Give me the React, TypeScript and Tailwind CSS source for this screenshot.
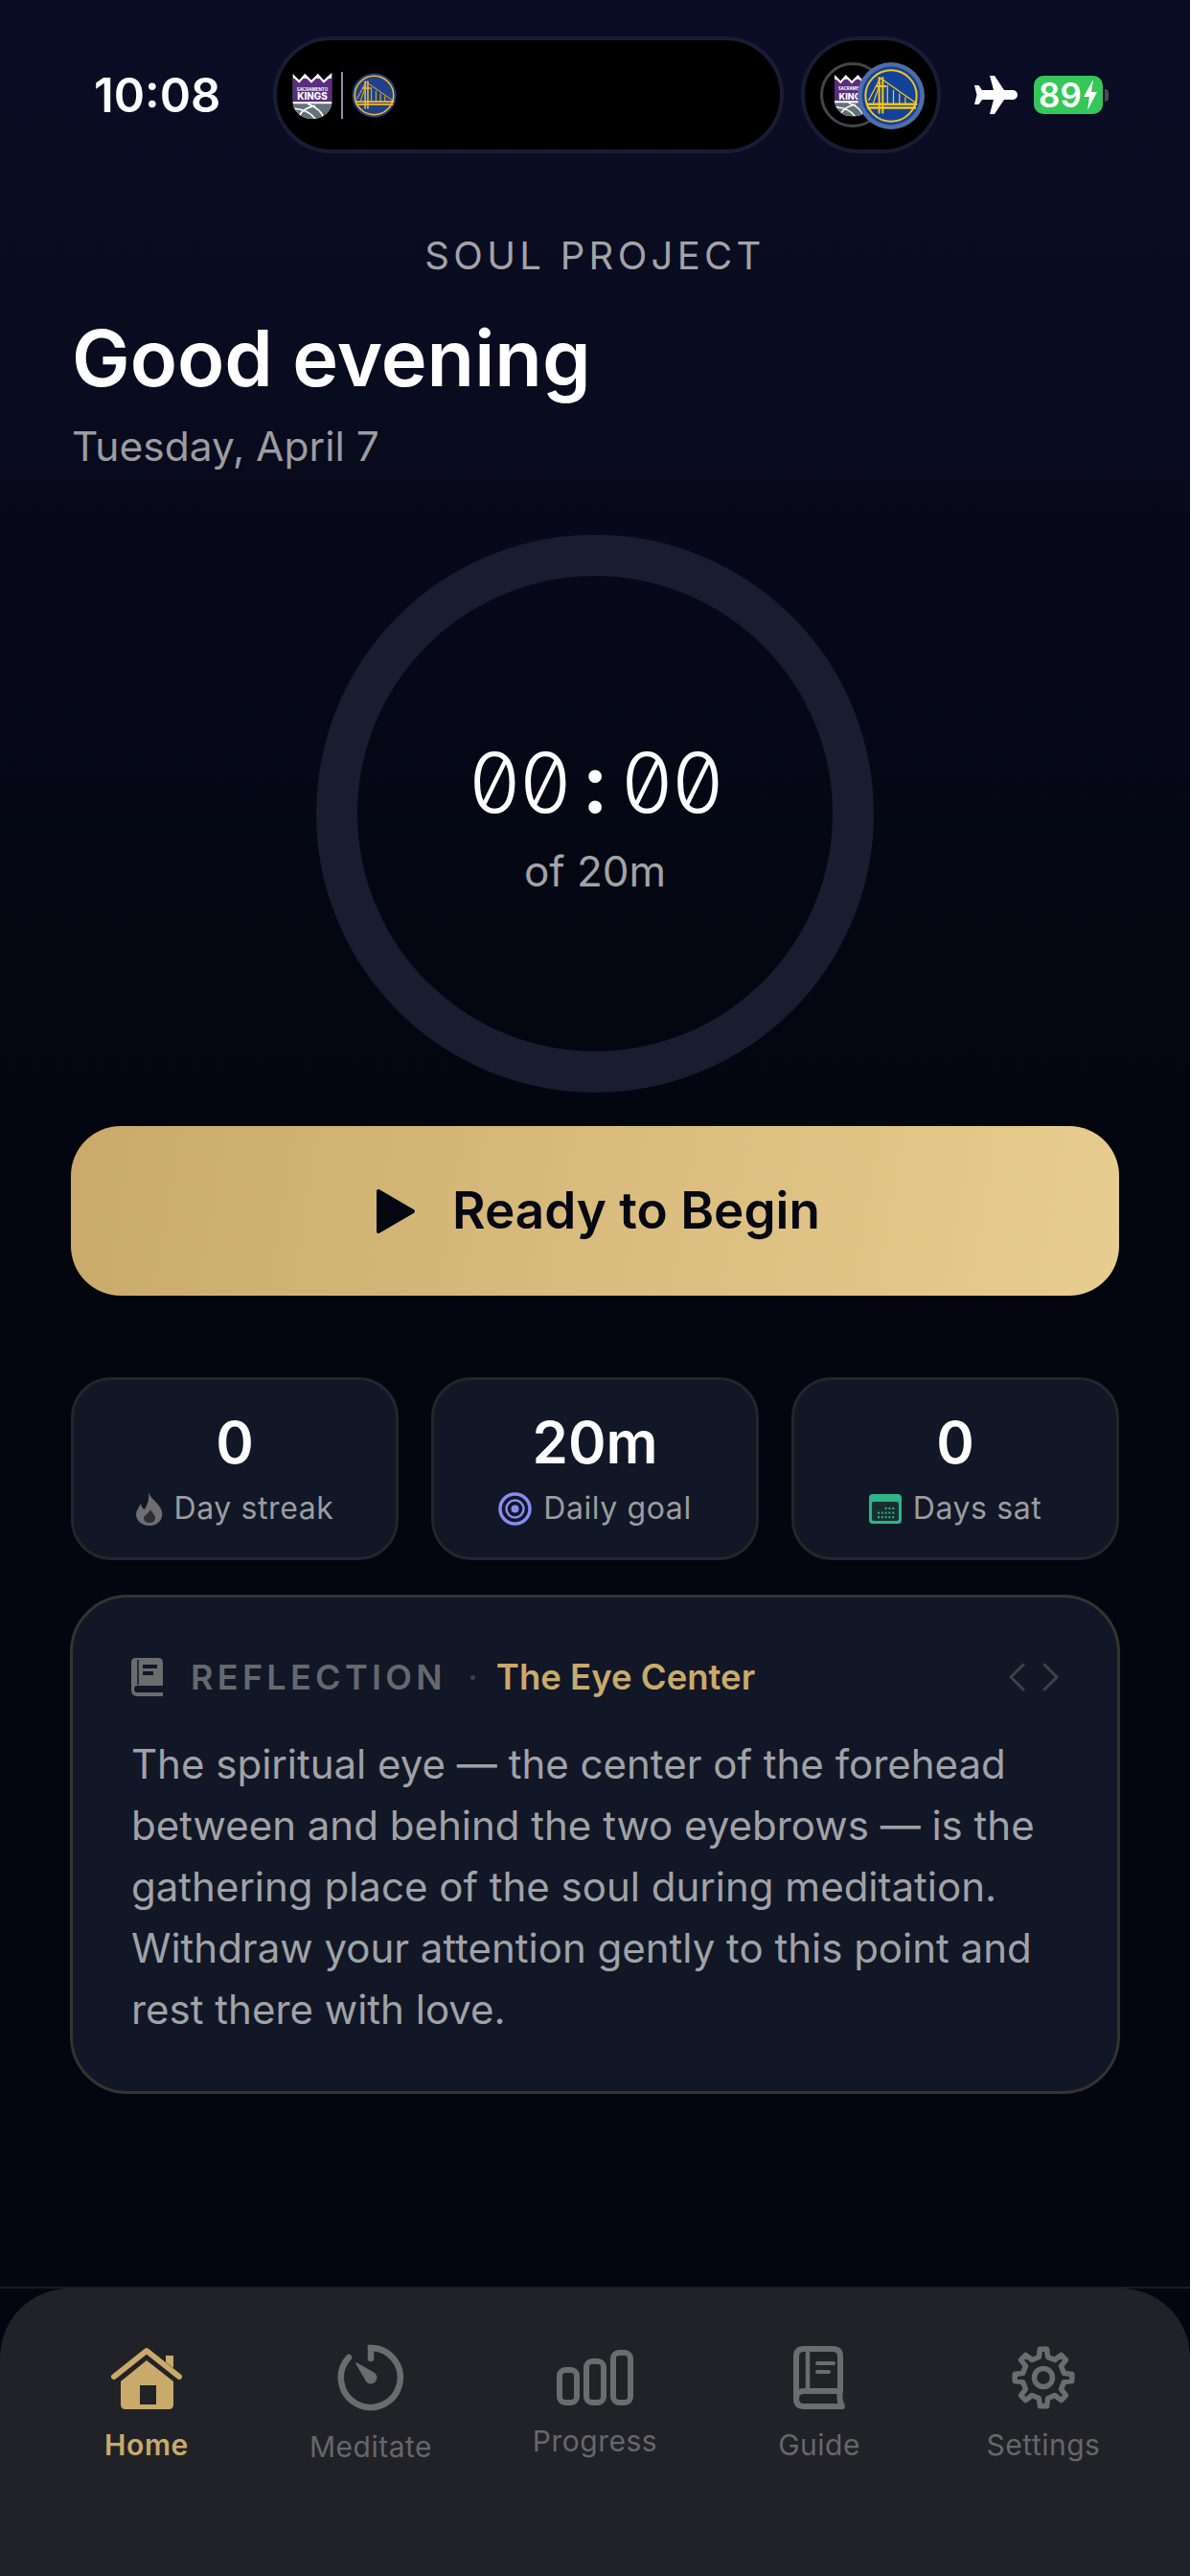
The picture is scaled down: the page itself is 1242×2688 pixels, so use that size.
import React from "react";

function GswLogo({ size, ring = "#fdb927", fill = "#1d428a" }: { size: number; ring?: string; fill?: string }) {
  return (
    <svg width={size} height={size} viewBox="0 0 50 50">
      <circle cx="25" cy="25" r="24.5" fill={fill} />
      <circle cx="25" cy="25" r="21.5" fill="none" stroke={ring} strokeWidth="1.6" />
      <path d="M15 9V40M18 9V40M12 17H21" stroke={ring} strokeWidth="1.6" fill="none" />
      <path d="M6 29L16 10L46 31M10 31L16 14M22 16V32M27 20V32M32 23V32M37 26V32" stroke={ring} strokeWidth="1" fill="none" />
      <path d="M4 32H47M5 35H46" stroke={ring} strokeWidth="2" fill="none" />
    </svg>
  );
}

function KingsLogo({ width, height }: { width: number; height: number }) {
  return (
    <svg width={width} height={height} viewBox="0 0 42 50">
      <defs>
        <clipPath id="shield">
          <path d="M0 2L7 9L13 2L20 9L27 2L33 9L42 1V31C42 42 32 50 21 50C10 50 0 42 0 31Z" />
        </clipPath>
      </defs>
      <g clipPath="url(#shield)">
        <rect width="42" height="50" fill="#fff" />
        <rect y="7" width="42" height="25" fill="#5a2d81" />
        <path d="M0 5L7 12L13 5L20 12L27 5L33 12L42 4V0H0Z" fill="#fff" />
        <rect y="32" width="42" height="18" fill="#63727a" />
        <path d="M0 32H42V34H0Z" fill="#fff" />
        <path d="M6 50C8 42 14 38 24 36M16 34C26 38 32 44 33 50M2 39C12 40 20 44 24 50" stroke="#fff" strokeWidth="1.7" fill="none" />
      </g>
      <text x="21" y="20" textAnchor="middle" fontSize="4.6" fontWeight="700" fill="#fff" fontFamily="Inter, sans-serif">SACRAMENTO</text>
      <text x="21" y="30" textAnchor="middle" fontSize="10" fontWeight="800" fill="#fff" fontFamily="Inter, sans-serif">KINGS</text>
    </svg>
  );
}

function gearPath(cx: number, cy: number, teeth: number, outer: number, inner: number) {
  const step = (Math.PI * 2) / teeth;
  const pts: string[] = [];
  for (let i = 0; i < teeth; i++) {
    const a = i * step - Math.PI / 2;
    const list: [number, number][] = [
      [a - step * 0.27, inner],
      [a - step * 0.15, outer],
      [a + step * 0.15, outer],
      [a + step * 0.27, inner],
    ];
    for (const [t, r] of list) {
      pts.push(`${(cx + Math.cos(t) * r).toFixed(2)} ${(cy + Math.sin(t) * r).toFixed(2)}`);
    }
  }
  return `M${pts.join("L")}Z`;
}

function HomeIcon() {
  return (
    <svg width="74" height="65" viewBox="0 0 74 65">
      <path d="M3 31L37 4L71 31" fill="none" stroke="#c9aa6b" strokeWidth="6" strokeLinecap="round" strokeLinejoin="round" />
      <path d="M57 14V9H65V22L57 16Z" fill="#c9aa6b" />
      <path fillRule="evenodd" d="M37 14L65 36V60Q65 65 60 65H15Q10 65 10 60V36ZM30 40V60H47V40Z" fill="#c9aa6b" />
    </svg>
  );
}

function MeditateIcon() {
  return (
    <svg width="70" height="70" viewBox="0 0 70 70">
      <path d="M35 15V4A31 31 0 1 1 12 14" fill="none" stroke="#6b6c6e" strokeWidth="6.5" strokeLinecap="round" />
      <path d="M20 20L39 31A5.5 5.5 0 0 1 31 39Z" fill="#6b6c6e" stroke="#6b6c6e" strokeWidth="1.5" strokeLinejoin="round" />
    </svg>
  );
}

function ProgressIcon() {
  return (
    <svg width="80" height="58" viewBox="0 0 80 58" fill="none" stroke="#6b6c6e" strokeWidth="6">
      <rect x="3" y="21" width="18" height="34" rx="6" />
      <rect x="31" y="12" width="18" height="43" rx="6" />
      <rect x="59" y="3" width="18" height="52" rx="6" />
    </svg>
  );
}

function GuideIcon() {
  return (
    <svg width="54" height="66" viewBox="0 0 54 66" fill="none" stroke="#6b6c6e" strokeWidth="6" strokeLinecap="round" strokeLinejoin="round">
      <path d="M3 53V11Q3 3 11 3H41Q49 3 49 11V47H11Q3 47 3 55Q3 63 11 63H51Q47 55 49 47" />
      <path d="M15 4V46" strokeWidth="4.5" />
      <path d="M25 18H42M25 27H37" strokeWidth="4" />
    </svg>
  );
}

function SettingsIcon() {
  return (
    <svg width="66" height="66" viewBox="0 0 66 66" fill="none" stroke="#6b6c6e" strokeWidth="5.5" strokeLinejoin="round">
      <path d={gearPath(33, 33, 8, 30, 22)} />
      <circle cx="33" cy="33" r="9.5" />
    </svg>
  );
}

function FlameIcon() {
  return (
    <svg width="28" height="35" viewBox="0 0 28 35">
      <path d="M13 0C15 6 19 8 23 13C27 18 28 22 27 26C25 32 20 35 14 35C7 35 1 31 0 24C0 19 3 16 5 12C6 16 7 17 9 18C12 13 14 7 13 0Z" fill="#6f6f71" />
      <path d="M15 18C16 21 20 23 20 27C20 30 17 32 14 32C11 32 8 30 8 27C8 24 13 23 15 18Z" fill="#2d2f36" />
    </svg>
  );
}

function TargetIcon() {
  return (
    <svg width="35" height="35" viewBox="0 0 35 35" fill="none" stroke="#8a8cf2">
      <circle cx="17.5" cy="17.5" r="15.5" strokeWidth="3.5" />
      <circle cx="17.5" cy="17.5" r="9" strokeWidth="2.5" />
      <circle cx="17.5" cy="17.5" r="4" fill="#8a8cf2" stroke="none" />
    </svg>
  );
}

function CalendarIcon() {
  const dots = [];
  for (let r = 0; r < 3; r++) {
    for (let c = 0; c < 5; c++) {
      if (r === 0 && c < 2) continue;
      dots.push(<rect key={`${r}-${c}`} x={9 + c * 3.8} y={14 + r * 4.6} width="2" height="2" fill="#2fb387" />);
    }
  }
  return (
    <svg width="34" height="31" viewBox="0 0 34 31">
      <rect width="34" height="31" rx="4" fill="#2fb387" />
      <rect x="3" y="8" width="28" height="20" rx="2" fill="#17302f" />
      {dots}
    </svg>
  );
}

function SmallBook() {
  return (
    <svg width="33" height="40" viewBox="0 0 33 40">
      <path fillRule="evenodd" d="M5 0H28Q33 0 33 5V29H6Q3 29 3 32.5Q3 36 6 36H33V40H6Q0 40 0 33V5Q0 0 5 0ZM12 7V11H27V7ZM12 14V18H23V14Z" fill="#6b6c6e" />
      <path d="M7 2V28" stroke="#111727" strokeWidth="1.5" />
    </svg>
  );
}

function Stat({ value, label, icon }: { value: string; label: string; icon: React.ReactNode }) {
  return (
    <div className="flex h-[191px] w-[342px] flex-col items-center rounded-[42px] border-[3px] border-[#25262a] bg-[#111726] pt-[29px]">
      <div className="text-[60px] leading-[72px] font-semibold text-white">{value}</div>
      <div className="mt-[13px] flex items-center gap-[12px] text-[32px] leading-[40px] tracking-[0.6px] text-[#9c9ca0]">
        {icon}
        <span>{label}</span>
      </div>
    </div>
  );
}

function NavItem({ icon, label, active }: { icon: React.ReactNode; label: string; active?: boolean }) {
  return (
    <div className="flex w-[234px] flex-col items-center gap-[19px]">
      {icon}
      <span className={active ? "text-[30px] leading-[36px] font-semibold tracking-[0.6px] text-[#c9aa6b]" : "text-[30px] leading-[36px] tracking-[0.5px] text-[#66676b]"}>{label}</span>
    </div>
  );
}

export default function App() {
  const clock = ["0", "0", ":", "0", "0"];
  return (
    <div className="flex h-[2688px] w-[1242px] flex-col overflow-hidden bg-[linear-gradient(180deg,#0b0d25_0%,#090b1f_15%,#060818_25%,#03060f_42%,#030611_100%)] font-['Inter',sans-serif] text-white">
      <div className="mt-[38px] flex h-[122px] items-center pl-[98px]">
        <div className="w-[187px] text-[49px] leading-none font-semibold">10:08</div>
        <div className="flex h-[122px] w-[533px] items-center gap-[9px] rounded-[61px] border-[4px] border-[#1a1c33] bg-black pl-[16px]">
          <KingsLogo width={42} height={49} />
          <div className="h-[49px] w-[2px] bg-[#8d93a8]" />
          <GswLogo size={47} />
        </div>
        <div className="relative ml-[18px] h-[122px] w-[146px] rounded-[61px] border-[4px] border-[#1a1c33] bg-black">
          <div className="absolute left-[16px] top-[23px] flex h-[68px] w-[68px] items-center justify-center overflow-hidden rounded-full border-[3px] border-[#454545] bg-black">
            <KingsLogo width={38} height={46} />
          </div>
          <div className="absolute left-[55px] top-[23px] flex h-[70px] w-[70px] items-center justify-center rounded-full bg-[#4f6da8]">
            <GswLogo size={62} ring="#f7c51e" fill="#11439a" />
          </div>
        </div>
        <svg className="ml-[34px]" width="46" height="40" viewBox="0 0 46 40">
          <path d="M17 0H22L32 15H41C44 15 46 17.500 46 20C46 22.500 44 25 41 25H32L22 40H17L21 25H9L5.500 30H1L3.500 20L1 10H5.500L9 15H21Z" fill="#fff" />
        </svg>
        <div className="ml-[17px] flex h-[40px] w-[72px] items-center justify-center gap-[1px] rounded-[10px] bg-[#34c759] text-[35px] leading-none font-semibold text-white">
          <span>89</span>
          <svg width="16" height="32" viewBox="0 0 16 32">
            <path d="M11 0L1 18H7L5 32L15 13H9Z" fill="#fff" />
          </svg>
        </div>
        <div className="ml-[2px] h-[13px] w-[4px] rounded-r-full bg-[#4a4c55]" />
      </div>

      <div className="mt-[84px] text-center text-[40px] leading-[46px] tracking-[4.3px] text-[#a3a3a6]">SOUL PROJECT</div>

      <div className="mt-[34px] px-[75px]">
        <div className="text-[81px] leading-[100px] font-semibold">Good evening</div>
        <div className="mt-[17px] text-[42.500px] leading-[50px] text-[#9c9ca0]">Tuesday, April 7</div>
      </div>

      <div className="mt-[67px] flex justify-center">
        <div className="flex h-[582px] w-[582px] flex-col items-center justify-center rounded-full border-[43px] border-[#181e30] pt-[7px]">
          <div className="flex text-[86px] leading-[90px] font-light slashed-zero tabular-nums">
            {clock.map((c, i) => (
              <span key={i} className={c === ":" ? "w-[53px] text-center font-semibold" : "w-[53px] text-center"}>{c}</span>
            ))}
          </div>
          <div className="mt-[23px] text-[44px] leading-[48px] text-[#a3a3a6]">of 20m</div>
        </div>
      </div>

      <div className="mx-[74px] mt-[35px] flex h-[177px] items-center justify-center gap-[38px] rounded-[52px] bg-[linear-gradient(100deg,#c9aa6b,#e8cd90)] pl-[6px] text-[53px] font-semibold text-[#050712]">
        <svg width="42" height="46" viewBox="0 0 42 46">
          <path d="M3 2L39 23L3 44Z" fill="#050712" stroke="#050712" strokeWidth="4" strokeLinejoin="round" />
        </svg>
        <span>Ready to Begin</span>
      </div>

      <div className="mx-[74px] mt-[85px] flex justify-between">
        <Stat value="0" label="Day streak" icon={<FlameIcon />} />
        <Stat value="20m" label="Daily goal" icon={<TargetIcon />} />
        <Stat value="0" label="Days sat" icon={<CalendarIcon />} />
      </div>

      <div className="mx-[73px] mt-[36px] h-[521px] rounded-[60px] border-[3px] border-[#35332f] bg-[#111727] px-[61px] pt-[61px]">
        <div className="flex items-center">
          <SmallBook />
          <span className="ml-[29px] text-[36px] leading-[44px] font-semibold tracking-[4.300px] text-[#67686c]">REFLECTION</span>
          <span className="ml-[25px] h-[5px] w-[5px] rounded-full bg-[#3f4147]" />
          <span className="ml-[22px] text-[36.500px] leading-[44px] font-semibold text-[#c9aa6b]">The Eye Center</span>
          <svg className="ml-auto mr-[-2px]" width="56" height="30" viewBox="0 0 56 30" fill="none" stroke="#3f4147" strokeWidth="3" strokeLinecap="round" strokeLinejoin="round">
            <path d="M17 2L4 15L17 28M39 2L52 15L39 28" />
          </svg>
        </div>
        <p className="mt-[37px] text-[42px] leading-[64px] text-[#a1a2a6]">
          The spiritual eye — the center of the forehead<br />
          between and behind the two eyebrows — is the<br />
          gathering place of the soul during meditation.<br />
          Withdraw your attention gently to this point and<br />
          rest there with love.
        </p>
      </div>

      <div className="mt-auto h-[2px] bg-[#1c1d20]" />
      <div className="h-[300px] rounded-t-[72px] bg-[#212227] px-[36px] pt-[58px]">
        <div className="flex items-center">
          <NavItem icon={<HomeIcon />} label="Home" active />
          <NavItem icon={<MeditateIcon />} label="Meditate" />
          <NavItem icon={<ProgressIcon />} label="Progress" />
          <NavItem icon={<GuideIcon />} label="Guide" />
          <NavItem icon={<SettingsIcon />} label="Settings" />
        </div>
      </div>
    </div>
  );
}
